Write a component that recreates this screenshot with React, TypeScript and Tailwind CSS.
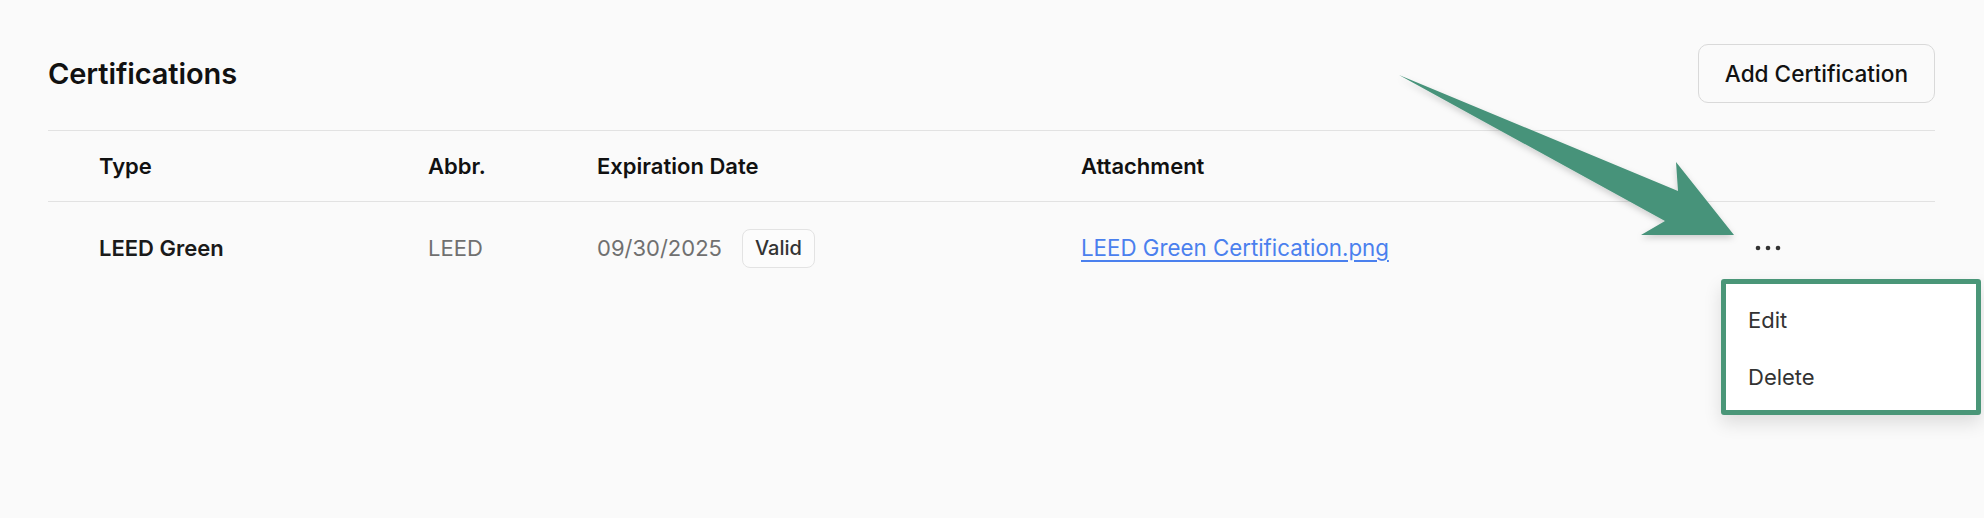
interface Certification {
  type: string;
  abbr: string;
  expires: string;
  status: string;
  file: string;
}

const certifications: Certification[] = [
  {
    type: 'LEED Green',
    abbr: 'LEED',
    expires: '09/30/2025',
    status: 'Valid',
    file: 'LEED Green Certification.png',
  },
];

const cols = 'grid grid-cols-[51px_329px_169px_484px_659px_1fr] items-center';

function CalloutArrow() {
  return (
    <svg
      className="pointer-events-none absolute left-0 top-0"
      width="1984"
      height="518"
      viewBox="0 0 1984 518"
    >
      <defs>
        <filter id="arrow-shadow" x="-10%" y="-10%" width="130%" height="140%">
          <feDropShadow dx="0" dy="3" stdDeviation="3" floodColor="#000" floodOpacity="0.18" />
        </filter>
      </defs>
      <polygon
        points="1399,75 1678,191 1676,162 1734,235 1641,235 1665,221"
        fill="#47937a"
        filter="url(#arrow-shadow)"
      />
    </svg>
  );
}

function Dots() {
  return (
    <svg width="26" height="6" viewBox="0 0 26 6" fill="#333">
      <circle cx="3" cy="3" r="2.3" />
      <circle cx="13" cy="3" r="2.3" />
      <circle cx="23" cy="3" r="2.3" />
    </svg>
  );
}

function RowMenu() {
  return (
    <div className="absolute left-[1721px] top-[279px] w-[260px] rounded-[3px] border-[5px] border-[#4a9678] bg-white pb-[4px] pt-[8px] shadow-[0_8px_18px_rgba(0,0,0,0.12)]">
      <div className="flex h-[57px] items-center px-[22px] text-[22px] text-[#333]">Edit</div>
      <div className="flex h-[57px] items-center px-[22px] text-[22px] text-[#333]">Delete</div>
    </div>
  );
}

export default function App() {
  return (
    <div className="relative h-[518px] w-[1984px] overflow-hidden bg-[#fafafa] font-['Inter',sans-serif]">
      <div className="pl-[48px] pr-[49px] pt-[44px]">
        <div className="flex items-center justify-between">
          <h2 className="text-[29px] font-semibold tracking-[-0.1px] text-[#111]">Certifications</h2>
          <button className="h-[59px] rounded-[10px] border border-[#d9d9d9] bg-[#fafafa] px-[26px] text-[22.6px] font-medium text-[#111]">
            Add Certification
          </button>
        </div>

        <div className="mt-[27px] border-t border-[#e2e2e2]">
          <div className={`${cols} h-[71px] border-b border-[#e2e2e2] text-[22px] font-semibold text-[#111]`}>
            <div />
            <div>Type</div>
            <div>Abbr.</div>
            <div>Expiration Date</div>
            <div>Attachment</div>
            <div />
          </div>

          {certifications.map((c) => (
            <div key={c.file} className={`${cols} h-[92px] text-[22px]`}>
              <div />
              <div className="font-semibold text-[#1a1a1a]">{c.type}</div>
              <div className="text-[#707070]">{c.abbr}</div>
              <div className="flex items-center gap-[20px] text-[#707070]">
                <span>{c.expires}</span>
                <span className="flex h-[39px] items-center rounded-[8px] border border-[#e3e3e3] bg-[#fcfcfc] px-[12px] text-[20px] font-medium text-[#333]">
                  {c.status}
                </span>
              </div>
              <div>
                <a href="#" className="text-[22.3px] text-[#4a80ee] underline underline-offset-[4px]">
                  {c.file}
                </a>
              </div>
              <div className="flex pl-[15px]">
                <Dots />
              </div>
            </div>
          ))}
        </div>
      </div>

      <RowMenu />
      <CalloutArrow />
    </div>
  );
}
